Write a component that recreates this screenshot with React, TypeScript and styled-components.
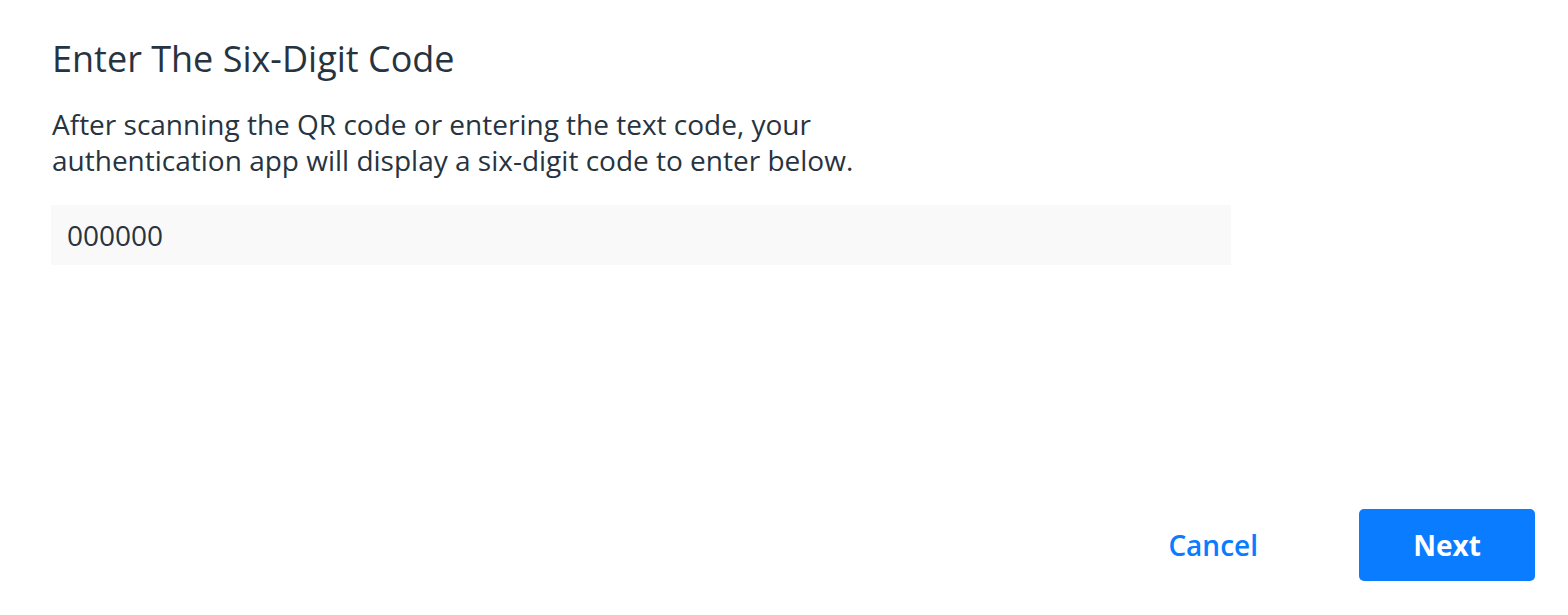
import styled, { createGlobalStyle } from "styled-components";

const GlobalStyle = createGlobalStyle`
  html, body { margin: 0; padding: 0; background: #ffffff; }
  body { font-family: "Open Sans", "Liberation Sans", sans-serif; color: #27343f; }
`;

const Dialog = styled.div`
  width: 1568px;
  height: 615px;
  box-sizing: border-box;
  padding: 34px 33px 34px 51px;
  display: flex;
  flex-direction: column;
`;

const Title = styled.h1`
  margin: 0 0 0 1px;
  font-size: 36px;
  font-weight: 400;
  line-height: 50px;
  color: #27343f;
`;

const Description = styled.p`
  margin: 22px 0 0 1px;
  font-size: 28px;
  line-height: 36px;
  max-width: 830px;
  color: #27343f;
`;

const CodeInput = styled.input`
  margin-top: 27px;
  width: 1180px;
  height: 60px;
  box-sizing: border-box;
  border: none;
  outline: none;
  background: #f9f9f9;
  padding: 0 16px;
  font-family: inherit;
  font-size: 28px;
  color: #27343f;
`;

const Footer = styled.div`
  margin-top: auto;
  display: flex;
  justify-content: flex-end;
  align-items: center;
  gap: 101px;
`;

const Button = styled.button<{ $primary?: boolean }>`
  border: none;
  border-radius: 5px;
  font-family: inherit;
  font-size: 28px;
  font-weight: ${(p) => (p.$primary ? 700 : 600)};
  height: 72px;
  width: ${(p) => (p.$primary ? "176px" : "auto")};
  padding: 0;
  background: ${(p) => (p.$primary ? "#0a7cff" : "transparent")};
  color: ${(p) => (p.$primary ? "#ffffff" : "#0a7cff")};
  cursor: pointer;
`;

export default function App() {
  return (
    <>
      <GlobalStyle />
      <Dialog>
        <Title>Enter The Six-Digit Code</Title>
        <Description>
          After scanning the QR code or entering the text code, your authentication app will display a six-digit code to enter below.
        </Description>
        <CodeInput defaultValue="000000" />
        <Footer>
          <Button>Cancel</Button>
          <Button $primary>Next</Button>
        </Footer>
      </Dialog>
    </>
  );
}
